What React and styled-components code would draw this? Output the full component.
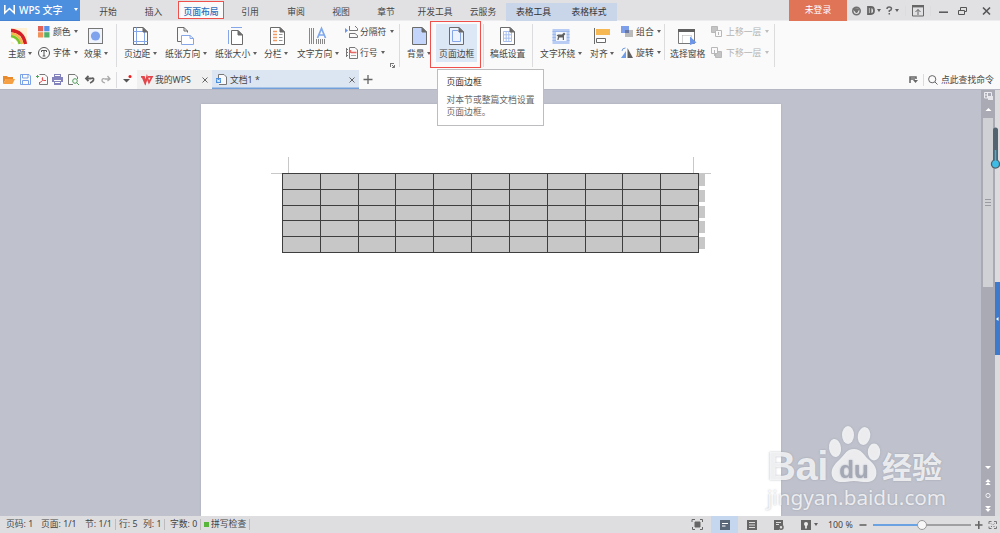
import React from "react";
import styled, { createGlobalStyle } from "styled-components";

const Global = createGlobalStyle`
  * { box-sizing: border-box; }
  body { margin: 0; overflow: hidden; }
`;

const INK = "#6b6b6b";
const BLUE = "#86a6ea";

const Window = styled.div`
  width: 1000px;
  height: 533px;
  display: flex;
  flex-direction: column;
  overflow: hidden;
  position: relative;
  background: #fafafa;
  color: #444;
  font: 8.8px/12px "Noto Sans", "Noto Sans CJK SC", sans-serif;
  white-space: nowrap;
`;
const Icon = styled.svg`
  display: block;
  flex: none;
  overflow: visible;
`;
const Caret = styled.i`
  flex: none;
  width: 0;
  height: 0;
  margin-left: ${(p) => p.$gap ?? 2.5}px;
  border: 2.3px solid transparent;
  border-top: 3px solid ${(p) => (p.$dim ? "#bdbdbd" : "#606060")};
  border-bottom: 0;
`;

/* Title bar */
const TitleBar = styled.header`
  flex: 0 0 21px;
  display: flex;
  align-items: stretch;
  background: linear-gradient(#e1e1e4 20px, #ededef 20px);
`;
const Brand = styled.div`
  flex: 0 0 80px;
  height: 20.5px;
  display: flex;
  align-items: center;
  padding-left: 4px;
  background: #4c8fdf;
  border-bottom: 1px solid #4583d2;
  color: #fff;
  font-size: 10px;
  font-weight: 500;
`;
const BrandName = styled.span`
  width: 46px;
  margin-left: 4px;
`;
const BrandMenu = styled.span`
  display: flex;
  align-items: center;
  justify-content: center;
  align-self: stretch;
  flex: 1;
  margin-left: 6px;
  i { border-top-color: #fff; margin: 0; }
`;
const MenuTab = styled.span`
  flex: 0 0 ${(p) => p.$w}px;
  height: 21px;
  padding-top: 6px;
  text-align: center;
`;
const CurrentTab = styled(MenuTab)`
  height: 18px;
  margin-top: 1px;
  padding-top: 4px;
  background: #fafafa;
  border: 1px solid #f0504c;
  color: #2f6fbd;
  font-weight: 500;
`;
const ContextTabs = styled.div`
  display: flex;
  flex: 0 0 111px;
  height: 18px;
  margin-top: 3px;
  background: #c9d5e9;
  color: #333;
  ${MenuTab} { height: 18px; padding-top: 3px; }
`;
const Login = styled.div`
  flex: 0 0 58px;
  height: 20.5px;
  margin-left: 172px;
  background: #e07456;
  color: #fff;
  line-height: 20px;
  text-align: center;
`;
const WindowTools = styled.div`
  flex: 1;
  display: flex;
  align-items: center;
`;

/* Ribbon */
const Ribbon = styled.div`
  flex: 0 0 49px;
  display: flex;
  align-items: flex-start;
  padding: 3px 0 0 8px;
`;
const Tool = styled.div`
  flex: 0 0 ${(p) => p.$w}px;
  height: 38px;
  display: flex;
  flex-direction: column;
  svg { margin: 1.5px 0 1.5px ${(p) => p.$ix}px; }
`;
const Label = styled.span`
  display: flex;
  align-items: center;
  height: 13px;
  color: ${(p) => (p.$dim ? "#b3b3b3" : "#444")};
`;
const Stack = styled.div`
  flex: 0 0 ${(p) => p.$w}px;
  display: flex;
  flex-direction: column;
  gap: 8px;
  padding-top: 1px;
`;
const SmallTool = styled.div`
  display: flex;
  align-items: center;
  height: 13px;
  gap: ${(p) => p.$gap ?? 3}px;
`;
const Divider = styled.i`
  flex: 0 0 1px;
  height: ${(p) => p.$h ?? 43}px;
  margin-right: ${(p) => p.$r ?? 7}px;
  margin-left: ${(p) => p.$l ?? 0}px;
  background: #dcdcde;
`;
const BorderFrame = styled.div`
  flex: 0 0 51px;
  height: 47px;
  margin: -3px 2px 0 -1px;
  padding: 2px 3px 0 5px;
  border: 1px solid #f0504c;
`;
const BorderTool = styled(Tool)`
  width: 41px;
  padding-left: 3px;
  background: #dde8f7;
`;
const LauncherCell = styled.div`
  flex: 0 0 6px;
  padding-top: 39px;
  margin-left: -10px;
  margin-right: 3px;
`;

/* Quick access and document tabs */
const DocBar = styled.div`
  flex: 0 0 19px;
  display: flex;
  align-items: center;
  padding-left: 3px;
`;
const Slot = styled.span`
  flex: 0 0 ${(p) => p.$w}px;
  display: flex;
  align-items: center;
`;
const DocTab = styled.div`
  flex: 0 0 ${(p) => p.$w}px;
  height: 19px;
  display: flex;
  align-items: center;
  gap: 3px;
  padding: 0 4px;
  background: ${(p) => (p.$active ? "#dce6f3" : "#f0f0f1")};
  box-shadow: ${(p) => (p.$active ? "inset 0 -1.5px #729fd9" : "none")};
`;
const Grow = styled.span`
  flex: 1;
`;

/* Workspace */
const Workspace = styled.main`
  flex: 0 0 427px;
  display: flex;
  background: #bfc2cc;
  border-top: 1px solid #b5b8c2;
`;
const Canvas = styled.div`
  flex: 1;
  display: flex;
  padding: 14px 0 0 200.5px;
`;
const Page = styled.div`
  width: 580.5px;
  padding: 53px 0 0 70.5px;
  background: #fff;
  box-shadow: 0 0 2px #a9acb7;
`;
const MarginMarks = styled.div`
  display: flex;
  justify-content: space-between;
  width: 440px;
  height: 17px;
`;
const Corner = styled.i`
  width: 18px;
  border: 0 solid #c8c8c8;
  border-bottom-width: 1px;
  ${(p) => (p.$right ? "border-left-width: 1px;" : "border-right-width: 1px;")}
`;
const TableLine = styled.div`
  display: flex;
  margin: -1px 0 0 11px;
`;
const Table = styled.div`
  width: 417px;
  height: 80px;
  display: grid;
  grid-template-columns: repeat(11, 1fr);
  grid-template-rows: repeat(5, 1fr);
  gap: 1px;
  padding: 1px;
  background: #3e3e3e;
`;
const Cell = styled.i`
  background: #c7c7c7;
`;
const RowEnds = styled.div`
  display: grid;
  grid-template-rows: repeat(5, 12px);
  row-gap: 3.8px;
  width: 6px;
  padding-top: 1px;
`;
const ScrollBar = styled.div`
  flex: 0 0 14px;
  display: flex;
  flex-direction: column;
  align-items: center;
  background: #a9aab4;
  padding-top: 2px;
`;
const Thumb = styled.div`
  width: 10px;
  height: 169px;
  margin-top: 6px;
  background: #d0d1d5;
  display: flex;
  align-items: center;
  justify-content: center;
  padding-bottom: 1px;
`;
const ScrollEnd = styled.div`
  margin-top: auto;
  height: 52px;
`;
const SideStrip = styled.div`
  flex: 0 0 5px;
  padding-top: 192px;
  background: #dcdcdf;
`;
const SideHandle = styled.div`
  height: 73px;
  display: flex;
  align-items: center;
  justify-content: center;
  background: #3d7acb;
`;

/* Status bar */
const StatusBar = styled.footer`
  flex: 0 0 17px;
  display: flex;
  align-items: center;
  padding-left: 6px;
  background: #dedee0;
`;
const StatusText = styled.span`
  flex: 0 0 ${(p) => p.$w}px;
  border-right: ${(p) => (p.$bar ? "1px solid #bcbcbe" : "0")};
  height: 11px;
  line-height: 11px;
  margin-right: ${(p) => p.$r ?? 0}px;
  display: flex;
  align-items: center;
`;
const Green = styled.i`
  width: 5px;
  height: 5px;
  margin-right: 2px;
  background: #57b53c;
`;
const View = styled.span`
  flex: 0 0 27px;
  height: 17px;
  display: flex;
  align-items: center;
  justify-content: center;
  background: ${(p) => (p.$on ? "#c5d7ee" : "transparent")};
`;
const Track = styled.div`
  flex: 0 0 98px;
  height: 2px;
  margin: 0 4px 0 6px;
  display: flex;
  align-items: center;
  background: linear-gradient(90deg, #6ba2e2 50%, #a0a0a2 50%);
`;
const Knob = styled.i`
  width: 10px;
  height: 10px;
  margin-left: 44px;
  border: 1px solid #999;
  border-radius: 50%;
  background: #f7f7f7;
`;

/* Overlays */
const Tooltip = styled.div`
  position: absolute;
  left: 437px;
  top: 69px;
  width: 107px;
  height: 57px;
  padding: 6px 8.5px;
  background: #fff;
  border: 1px solid #bdbdbf;
  color: #666;
`;
const TooltipTitle = styled.div`
  margin-bottom: 6px;
  color: #333;
`;
const Thermo = styled(Icon)`
  position: absolute;
  left: 990px;
  top: 127px;
`;
const Watermark = styled.div`
  position: absolute;
  left: 767px;
  top: 424px;
  width: 185px;
  color: rgba(255, 255, 255, 0.78);
  text-shadow: 0 0 2px rgba(130, 135, 150, 0.6);
`;
const MarkRow = styled.div`
  display: flex;
  align-items: flex-end;
  height: 61px;
`;
const Bai = styled.span`
  width: 62px;
  font: bold 40px/38px "Liberation Sans", sans-serif;
  letter-spacing: -0.5px;
`;
const Paw = styled(Icon)`
  margin-bottom: 2px;
  filter: drop-shadow(0 0 1px rgba(130, 135, 150, 0.5));
`;
const Jing = styled.span`
  margin: 0 0 3px 3px;
  font: bold 30px/34px "Noto Sans CJK SC", sans-serif;
`;
const Site = styled.div`
  margin-top: -1px;
  font: 20.7px/26px "Noto Sans", sans-serif;
`;

const sheet = "M2.5 1.5H12L16.5 6V18.5H2.5Z";
const Sheet = ({ fill = "#fff", children }) => (
  <Icon width="20" height="20" viewBox="0 0 20 20" fill="none" stroke={INK}>
    <path d={sheet} fill={fill} />
    {children}
    <path d="M12 1.5V6H16.5Z" fill={INK} />
  </Icon>
);

const big = {
  theme: (
    <Icon width="20" height="20" fill="none" strokeWidth="2.5">
      <path d="M3 2H19V18H3Z" fill="#fff0d4" />
      <path d="M3 4.5Q15 5 17.5 18" stroke="#d62027" strokeWidth="3.4" />
      <path d="M3 7.5Q12 8 14.3 18" stroke="#f6b64a" />
      <path d="M3 10Q10 11 11.7 18" stroke="#76c52d" />
      <path d="M3 14Q7 14 8 18" stroke="#fff" strokeWidth="3" />
    </Icon>
  ),
  effect: (
    <Icon width="20" height="20">
      <rect x="2.5" y="2.5" width="14" height="15" fill="#eef3fc" stroke="#777" />
      <circle cx="9.5" cy="10" r="4.6" fill="#7fa3ec" />
    </Icon>
  ),
  margins: (
    <Sheet><path d="M5.5 1.5V18.5M13.5 5V18.5M2.5 5.5H16M2.5 15.5H16.5" stroke={BLUE} /></Sheet>
  ),
  orient: (
    <Icon width="20" height="20" fill="none" stroke={INK}>
      <path d="M5 15.5H1.5V1.5H8L11.5 5V6.5M8 1.5V5H11.5" />
      <path d="M5.5 9.5H14L17.5 12.5V18.5H5.5Z" fill="#fff" stroke={BLUE} />
      <path d="M14 9.5V12.5H17.5" stroke={BLUE} />
    </Icon>
  ),
  size: (
    <Icon width="20" height="20" fill="none" stroke={INK}>
      <path d="M4 1.5H15M1.5 4V18" stroke={BLUE} />
      <path d="M4.5 4.5H11L15.5 9V18.5H4.5Z" fill="#fff" />
      <path d="M11 4.5V9H15.5Z" fill={INK} />
    </Icon>
  ),
  columns: (
    <Sheet>
      <path d="M5 5.5H9M5 8.5H9M5 11.5H9M5 14.5H9" stroke="#f09a68" strokeWidth="1.3" />
      <path d="M11 8.5H14.5M11 11.5H14.5M11 14.5H14.5" stroke="#999" />
    </Sheet>
  ),
  direction: (
    <Icon width="20" height="20" fill="none" stroke="#888">
      <path d="M.5 2V18M2.5 2V18M4.5 2V18M7.5 13V18M9.5 13V18M11.5 13V18M13.5 13V18M15.5 13V18" />
      <path d="M8.5 12L12.5 2.5L16.5 12M10 9H15" stroke="#7fa8ed" strokeWidth="1.7" />
    </Icon>
  ),
  background: <Sheet fill="#c3d5fb" />,
  border: <Sheet fill="#edf3fc"><path d="M5.5 4.5H11L13.5 7V15.5H5.5Z" stroke={BLUE} /></Sheet>,
  grid: <Sheet><path d="M5.5 5.5H13.5V15.5H5.5ZM8.2 5.5V15.5M10.8 5.5V15.5M5.5 8.8H13.5M5.5 12.2H13.5" stroke="#a8bff0" /></Sheet>,
  wrap: (
    <Icon width="20" height="20" fill="none">
      <path d="M1.5 3H18.5V18H1.5Z" fill="#b9ccf4" />
      <path d="M1.5 5.5H18.5M1.5 8.5H18.5M1.5 11.5H18.5M1.5 14.5H18.5" stroke="#9db9ee" />
      <path d="M5 6H15.5V15H5Z" fill="#f5f8ff" />
      <path d="M5.5 9.5L7 8.5H11L13 6.5L14.5 8L13 9.5V14H11.8V11.5H8.2L7.5 14H6.3L7 10.5Z" fill="#606060" />
    </Icon>
  ),
  align: (
    <Icon width="20" height="20" fill="none" stroke={INK}>
      <path d="M1.5 2V18" />
      <path d="M3 3H17V9H3Z" fill="#f5b853" stroke="none" />
      <path d="M3.5 12.5H12.5V16.5H3.5Z" fill="#fff" />
    </Icon>
  ),
  pane: (
    <Icon width="20" height="20" fill="none" stroke="#777">
      <path d="M1.5 3.5H17.5V17.5H1.5Z" fill="#fff" />
      <path d="M1 4.5H18" stroke="#606060" strokeWidth="3" />
      <path d="M5.5 9.5H14.5V17M5.5 9.5V17" stroke="#aaa" strokeDasharray="1 1" />
      <path d="M13 10.5L19.5 16.5L13 19Z" fill="#6d96e9" stroke="none" />
    </Icon>
  ),
};

const small = {
  color: (
    <Icon width="12" height="12">
      <path d="M0 0H5.3V5.3H0Z" fill="#e06055" /><path d="M6.2 0H11.5V5.3H6.2Z" fill="#5790e8" />
      <path d="M0 6.2H5.3V11.5H0Z" fill="#f0935a" /><path d="M6.2 6.2H11.5V11.5H6.2Z" fill="#53b06b" />
    </Icon>
  ),
  font: (
    <Icon width="12" height="12" fill="none" stroke="#555">
      <circle cx="6" cy="6" r="5.5" /><path d="M3.5 5V3.5H8.5V5M6 3.5V9M4.7 9H7.3" />
    </Icon>
  ),
  breaks: (
    <Icon width="12" height="12" fill="none" stroke="#777">
      <path d="M3.5 0V4.5H11.5V2.5L9 0M3.5 12V7.5H9L11.5 9.5V11.5H3.5" />
      <path d="M-1 2L2 4.5L-1 7Z" fill="#6d96e9" stroke="none" />
    </Icon>
  ),
  lines: (
    <Icon width="12" height="12" fill="none" stroke="#777">
      <path d="M3.5 .5H9L11.5 3V11.5H3.5ZM0 2.5H2M0 5.5H2M0 8.5H2M.5 1V10" />
      <path d="M4.5 3V6M5 5.5H10.5" stroke="#e66864" strokeWidth="1.6" />
      <path d="M5 8.5H10" stroke="#aaa" />
    </Icon>
  ),
  group: (
    <Icon width="12" height="12">
      <path d="M0 0H8V7H0Z" fill="#7d9ee8" /><path d="M4 4H12V11H4Z" fill="#999" fillOpacity=".65" /><path d="M4 4H8V7H4Z" fill="#6874a2" />
    </Icon>
  ),
  rotate: (
    <Icon width="12" height="12">
      <path d="M6.5 1L12 11H6.5Z" fill="#606060" /><path d="M5 4V11H0Z" fill="#6f9be8" /><path d="M1 4Q1 1 4.5 1" fill="none" stroke="#6f9be8" />
    </Icon>
  ),
  up: (
    <Icon width="12" height="12" fill="#c4c4c4" stroke="#b8b8b8">
      <path d="M.5 .5H6.5V6.5H.5Z" /><path d="M4.5 4.5H10.5V10.5H4.5Z" fill="#fafafa" /><path d="M7.5 9V6" />
    </Icon>
  ),
  down: (
    <Icon width="12" height="12" fill="#fafafa" stroke="#b8b8b8">
      <path d="M4.5 4.5H10.5V10.5H4.5Z" fill="#c4c4c4" /><path d="M.5 .5H6.5V6.5H.5Z" /><path d="M3.5 3V9" />
    </Icon>
  ),
};

const Big = ({ w, ix, icon, text, caret = true }) => (
  <Tool $w={w} $ix={ix}>
    {big[icon]}
    <Label>{text}{caret && <Caret />}</Label>
  </Tool>
);
const Small = ({ icon, text, dim, gap }) => (
  <SmallTool $gap={gap}>
    {small[icon]}
    <Label $dim={dim}>{text}<Caret $gap={3.4} $dim={dim} /></Label>
  </SmallTool>
);
const Close = () => (
  <Icon width="6" height="6" stroke="#666" fill="none"><path d="M.5 .5L5.5 5.5M5.5 .5L.5 5.5" /></Icon>
);

export default function App() {
  return (
    <Window>
      <Global />
      <TitleBar>
        <Brand>
          <Icon width="11" height="9" fill="none" stroke="#fff" strokeWidth="1.6">
            <path d="M.8 0V8L5.5 3.5L10.2 8V0" />
          </Icon>
          <BrandName>WPS 文字</BrandName>
          <BrandMenu><Caret /></BrandMenu>
        </Brand>
        <MenuTab $w={56}>开始</MenuTab>
        <MenuTab $w={35}>插入</MenuTab>
        <MenuTab $w={7} />
        <CurrentTab $w={46}>页面布局</CurrentTab>
        <MenuTab $w={52}>引用</MenuTab>
        <MenuTab $w={40}>审阅</MenuTab>
        <MenuTab $w={50}>视图</MenuTab>
        <MenuTab $w={40}>章节</MenuTab>
        <MenuTab $w={58}>开发工具</MenuTab>
        <MenuTab $w={38}>云服务</MenuTab>
        <MenuTab $w={4} />
        <ContextTabs>
          <MenuTab $w={55}>表格工具</MenuTab>
          <MenuTab $w={56}>表格样式</MenuTab>
        </ContextTabs>
        <Login>未登录</Login>
        <WindowTools>
          <Slot $w={20}>
            <Icon width="20" height="10" fill="none" stroke="#707070">
              <circle cx="9.5" cy="5" r="3.7" strokeWidth="1.6" /><path d="M6 2.5L9.5 7L12 3Z" fill="#707070" />
            </Icon>
          </Slot>
          <Slot $w={19}>
            <Icon width="8" height="9" fill="none" stroke="#666" strokeWidth="1.8"><path d="M1 1H4Q7 1 7 4.5Q7 8 4 8H1ZM3.5 2V7" /></Icon>
            <Caret $gap={1.5} />
          </Slot>
          <Slot $w={19}>
            <Icon width="7" height="9" fill="none" stroke="#666" strokeWidth="1.5"><path d="M1 3Q1 1 3.2 1Q5.5 1 5.5 2.8Q5.5 4.2 3.3 4.8V6M3.3 7V8.6" /></Icon>
            <Caret $gap={1.5} />
          </Slot>
          <Divider $h={10} $r={6} />
          <Slot $w={18}>
            <Icon width="12" height="12" fill="none" stroke="#666"><path d="M.5 1V11H11.5V1M6 10V4.5M3.5 7L6 4.5L8.5 7" /><path d="M0 1.2H12" strokeWidth="2.4" /></Icon>
          </Slot>
          <Divider $h={10} $r={8} />
          <Icon width="60" height="12" fill="none" stroke="#555">
            <path d="M0 7.2H9" strokeWidth="1.5" />
            <path d="M19.5 5.5H25.5V9.5H19.5ZM21.5 5V2.5H27.5V6.5H26" />
            <path d="M44 2.5L51 9.5M51 2.5L44 9.5" strokeWidth="1.6" />
          </Icon>
        </WindowTools>
      </TitleBar>

      <Ribbon>
        <Big w={30} ix={0} icon="theme" text="主题" />
        <Stack $w={46}>
          <Small icon="color" text="颜色" />
          <Small icon="font" text="字体" />
        </Stack>
        <Big w={32} ix={2} icon="effect" text="效果" />
        <Divider />
        <Big w={41} ix={7} icon="margins" text="页边距" />
        <Big w={50} ix={11} icon="orient" text="纸张方向" />
        <Big w={49} ix={12} icon="size" text="纸张大小" />
        <Big w={33} ix={4} icon="columns" text="分栏" />
        <Big w={49} ix={12} icon="direction" text="文字方向" />
        <Stack $w={54}>
          <Small icon="breaks" text="分隔符" gap={2} />
          <Small icon="lines" text="行号" gap={2} />
        </Stack>
        <LauncherCell>
          <Icon width="5" height="5" fill="none" stroke="#777"><path d="M0 .5H4M.5 0V4M2 2L4.5 4.5M4.5 2V4.5H2" /></Icon>
        </LauncherCell>
        <Divider />
        <Big w={24} ix={3} icon="background" text="背景" />
        <BorderFrame>
          <BorderTool $w={41} $ix={8}>
            {big.border}
            <Label>页面边框</Label>
          </BorderTool>
        </BorderFrame>
        <Divider $r={6} />
        <Big w={42} ix={8} icon="grid" text="稿纸设置" caret={false} />
        <Divider />
        <Big w={50} ix={11} icon="wrap" text="文字环绕" />
        <Big w={31} ix={3} icon="align" text="对齐" />
        <Stack $w={43}>
          <Small icon="group" text="组合" />
          <Small icon="rotate" text="旋转" />
        </Stack>
        <Divider $h={36} $r={5} />
        <Big w={41} ix={7} icon="pane" text="选择窗格" caret={false} />
        <Stack $w={63}>
          <Small icon="up" text="上移一层" dim />
          <Small icon="down" text="下移一层" dim />
        </Stack>
        <Divider />
      </Ribbon>

      <DocBar>
        <Slot $w={17}><Icon width="12" height="9"><path d="M0 9V1H4L5 2H10V4H3Z" fill="#e88a2c" /><path d="M3 4H12L9.5 9H0Z" fill="#f6a044" /></Icon></Slot>
        <Slot $w={16}><Icon width="11" height="11" fill="none" stroke="#7ba1e8"><path d="M.5 .5H9L10.5 2V10.5H.5ZM2.5 .5V4H8V.5M2.5 10V6.5H8.5V10" /></Icon></Slot>
        <Slot $w={16}><Icon width="12" height="11" fill="none" stroke="#777"><path d="M3.5 .5H9L11.5 3V10.5H3.5V8" /><path d="M0 2.5H3M1.5 1V4" stroke="#4ba65a" /><path d="M4 8.5Q8 7 6.5 3.5Q5 7 10 6.5" stroke="#df5454" /></Icon></Slot>
        <Slot $w={16}><Icon width="11" height="11" fill="#8482bc"><path d="M2 0H9V3H2ZM0 3H11V8H9V6H2V8H0ZM2 7H9V11H2Z" /><path d="M3 1.5H8M3 8.5H8" stroke="#fff" /></Icon></Slot>
        <Slot $w={17}><Icon width="11" height="11" fill="none" stroke="#777"><path d="M9.5 5V3L7 .5H.5V10.5H5" /><circle cx="7" cy="7" r="2.3" stroke="#519d5a" /><path d="M8.5 8.5L11 11" stroke="#519d5a" /></Icon></Slot>
        <Slot $w={16}><Icon width="10" height="9" fill="none" stroke="#606060" strokeWidth="1.8"><path d="M1 3.5H6Q9 2.5 8.5 5Q8 7 5 8" /><path d="M3.5 1L1 3.5L3.5 6" /></Icon></Slot>
        <Slot $w={16}><Icon width="10" height="9" fill="none" stroke="#aaa" strokeWidth="1.3"><path d="M9 4H4Q1 3 1 5.5Q1 7 4 8M6.5 1L9 4L6.5 6" /></Icon></Slot>
        <Divider $h={16} $r={6} $l={-1} />
        <Slot $w={14}><Icon width="10" height="10"><path d="M0 4H7L3.5 7.5Z" fill="#555" /><circle cx="7" cy="1.5" r="1.5" fill="#f01818" /></Icon></Slot>
        <DocTab $w={75}>
          <Icon width="11" height="8" fill="none" stroke="#e3464b" strokeWidth="1.7"><path d="M0 .8H3L4.5 6.5L6 .8L8 6.5L11 .8H7M1.5 1L4 7L5.5 4M7 4L8.5 7" /></Icon>
          <span>我的WPS</span>
          <Grow /><Close />
        </DocTab>
        <DocTab $w={147} $active>
          <Icon width="11" height="11" fill="none" stroke="#777"><path d="M2.5 4V.5H8L10.5 3V10.5H3" fill="#f7f9fc" /><path d="M0 4H5V9H0Z" fill="#4c8fdf" stroke="none" /><path d="M1 5L2 8L2.5 6L3.2 8L4 5" stroke="#fff" strokeWidth=".7" /></Icon>
          <span>文档1 *</span>
          <Grow /><Close />
        </DocTab>
        <Slot $w={20}><Icon width="14" height="9" stroke="#666" strokeWidth="1.3"><path d="M4.5 4.5H13.5M9 0V9" /></Icon></Slot>
        <Grow />
        <Slot $w={14}><Icon width="10" height="8" fill="none" stroke="#666" strokeWidth="1.5"><path d="M1 7V1H7V3M1 3H6" /><path d="M4 4H9L6.5 7Z" fill="#666" stroke="none" /></Icon></Slot>
        <Divider $h={12} $r={4} />
        <Slot $w={13}><Icon width="10" height="10" fill="none" stroke="#666"><circle cx="4.2" cy="4.2" r="3.6" /><path d="M7 7L9.5 9.5" /></Icon></Slot>
        <Slot $w={59}>点此查找命令</Slot>
      </DocBar>

      <Workspace>
        <Canvas>
          <Page>
            <MarginMarks><Corner /><Corner $right /></MarginMarks>
            <TableLine>
              <Table>{Array.from({ length: 55 }, (_, i) => <Cell key={i} />)}</Table>
              <RowEnds>{Array.from({ length: 5 }, (_, i) => <Cell key={i} />)}</RowEnds>
            </TableLine>
          </Page>
        </Canvas>
        <ScrollBar>
          <Icon width="9" height="20" fill="none" stroke="#ececf0">
            <path d="M.5 .5H7.5V6H.5ZM3.5 .5V6M.5 3H4" /><path d="M4 4H9V8H4Z" fill="#e5e5ea" stroke="none" />
            <path d="M1.5 19L4.5 16L7.5 19Z" fill="#fff" stroke="none" />
          </Icon>
          <Thumb><Icon width="6" height="7" stroke="#9a9ba2"><path d="M0 .5H6M0 3.5H6M0 6.5H6" /></Icon></Thumb>
          <ScrollEnd>
            <Icon width="8" height="50" fill="#fff">
              <path d="M1 2H7L4 5ZM4 15L6.7 18H1.3ZM4 18L6.7 21H1.3ZM1 42H7L4 45ZM1.3 45H6.7L4 48Z" />
              <circle cx="4" cy="31.5" r="2.1" fill="none" stroke="#f1f1f4" />
            </Icon>
          </ScrollEnd>
        </ScrollBar>
        <SideStrip>
          <SideHandle><Icon width="3" height="4" fill="#fff"><path d="M0 2L2.5 0V4Z" /></Icon></SideHandle>
        </SideStrip>
      </Workspace>

      <StatusBar>
        <StatusText $w={35}>页码: 1</StatusText>
        <StatusText $w={44}>页面: 1/1</StatusText>
        <StatusText $w={31} $bar $r={3}>节: 1/1</StatusText>
        <StatusText $w={24}>行: 5</StatusText>
        <StatusText $w={22} $bar $r={5}>列: 1</StatusText>
        <StatusText $w={31} $bar $r={3}>字数: 0</StatusText>
        <StatusText $w={46} $bar><Green />拼写检查</StatusText>
        <Grow />
        <View><Icon width="11" height="11" fill="none" stroke="#666"><path d="M3 3H8V8H3Z" fill="#666" /><path d="M0 3V.5H3M8 .5H10.5V3M10.5 8V10.5H8M3 10.5H.5V8" /></Icon></View>
        <View $on><Icon width="10" height="10"><path d="M0 0H10V10H0Z" fill="#596779" /><path d="M2 3.5H8M2 6H5.5" stroke="#fff" /></Icon></View>
        <View><Icon width="10" height="10"><path d="M0 0H10V10H0Z" fill="#666" /><path d="M2 2.5H8M2 5H8M2 7.5H8" stroke="#ddd" /></Icon></View>
        <View><Icon width="10" height="10"><path d="M0 0H9V5H5V10H0Z" fill="#666" /><path d="M2 2.5H7M2 4.5H5" stroke="#ddd" /><circle cx="7" cy="7.3" r="2" fill="none" stroke="#666" strokeWidth="1.5" /></Icon></View>
        <View><Icon width="10" height="10"><path d="M0 0H10V10H0Z" fill="#666" /><circle cx="5" cy="4" r="2" fill="#eee" /><path d="M5 5V8.5" stroke="#eee" strokeWidth="1.7" /></Icon></View>
        <Slot $w={9}><Caret $gap={-5} /></Slot>
        <Slot $w={31}>100 %</Slot>
        <Icon width="8" height="8" stroke="#666" strokeWidth="1.6"><path d="M.5 4H7.5" /></Icon>
        <Track><Knob /></Track>
        <Icon width="8" height="8" stroke="#666" strokeWidth="1.6"><path d="M0 4H7.5M3.8 0V8" /></Icon>
        <Slot $w={17}><Icon width="17" height="8" fill="none" stroke="#777"><path d="M6 3V.5H8.5M11 .5H13.5V3M13.5 5.5V7.5H11M8.5 7.5H6V5.5M8 2.5L9 3.5M11.5 2.5L10.5 3.5M8 6L9 5M11.5 6L10.5 5" /></Icon></Slot>
      </StatusBar>

      <Tooltip>
        <TooltipTitle>页面边框</TooltipTitle>
        对本节或整篇文档设置<br />页面边框。
      </Tooltip>
      <Thermo width="10" height="42" fill="none">
        <path d="M5.5 3V36" stroke="#53636f" strokeWidth="5" strokeLinecap="round" />
        <circle cx="5.5" cy="37" r="4.7" fill="#4e606c" />
        <path d="M5.5 23V35" stroke="#35b5df" strokeWidth="1.5" />
        <circle cx="5.5" cy="37" r="3.4" fill="#3dbce5" />
      </Thermo>
      <Watermark>
        <MarkRow>
          <Bai>Bai</Bai>
          <Paw width="50" height="59" viewBox="0 0 50 59" fill="#fff" fillOpacity=".78">
            <ellipse cx="6" cy="24" rx="6" ry="9" transform="rotate(-8 6 24)" />
            <ellipse cx="19" cy="11" rx="6" ry="9" />
            <ellipse cx="35" cy="12" rx="6.2" ry="9" transform="rotate(10 35 12)" />
            <ellipse cx="45" cy="28" rx="6.2" ry="8.5" />
            <path d="M25 25C32 25 35 31 39 35C44 39 49 44 47 52C44 60 37 58 25 57C13 58 6 60 3 52C1 44 7 39 12 34C16 30 18 25 25 25Z" />
            <text x="25" y="54" textAnchor="middle" fill="#a5a9b5" fillOpacity="1" fontFamily="Liberation Sans, sans-serif" fontWeight="bold" fontSize="24">du</text>
          </Paw>
          <Jing>经验</Jing>
        </MarkRow>
        <Site>jingyan.baidu.com</Site>
      </Watermark>
    </Window>
  );
}
